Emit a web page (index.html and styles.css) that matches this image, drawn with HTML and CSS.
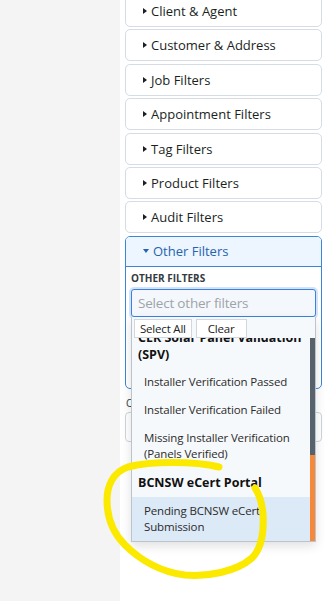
FILE: index.html
```html
<!DOCTYPE html>
<html lang="en">
<head>
    <meta charset="UTF-8">
    <meta name="viewport" content="width=device-width, initial-scale=1.0">
    <title>Filters</title>
    <link rel="stylesheet" href="styles.css">
</head>
<body>
    <div class="page">
        <aside class="side"></aside>

        <main class="panel">
            <div class="filters">
                <div class="card"><div class="card-head"><span class="caret"></span>Client &amp; Agent</div></div>
                <div class="card"><div class="card-head"><span class="caret"></span>Customer &amp; Address</div></div>
                <div class="card"><div class="card-head"><span class="caret"></span>Job Filters</div></div>
                <div class="card"><div class="card-head"><span class="caret"></span>Appointment Filters</div></div>
                <div class="card"><div class="card-head"><span class="caret"></span>Tag Filters</div></div>
                <div class="card"><div class="card-head"><span class="caret"></span>Product Filters</div></div>
                <div class="card"><div class="card-head"><span class="caret"></span>Audit Filters</div></div>

                <div class="card open">
                    <div class="card-head"><span class="caret down"></span>Other Filters</div>
                    <div class="card-body">
                        <div class="field-label">OTHER FILTERS</div>
                        <div class="select">
                            <div class="select-input">Select other filters</div>

                            <!-- open dropdown -->
                            <div class="dropdown">
                                <div class="dd-actions">
                                    <button class="btn-all">Select All</button>
                                    <button class="btn-clear">Clear</button>
                                </div>
                                <div class="dd-list">
                                    <div class="dd-view">
                                        <div class="dd-items">
                                            <div class="dd-group">CER Solar Panel Validation (SPV)</div>
                                            <div class="dd-item">Installer Verification Passed</div>
                                            <div class="dd-item">Installer Verification Failed</div>
                                            <div class="dd-item">Missing Installer Verification (Panels Verified)</div>
                                            <div class="dd-group">BCNSW eCert Portal</div>
                                            <div class="dd-item active">Pending BCNSW eCert Submission</div>
                                        </div>
                                    </div>
                                    <div class="scrollbar">
                                        <div class="thumb"></div>
                                        <div class="track"></div>
                                    </div>
                                </div>
                            </div>
                        </div>
                    </div>
                </div>

                <div class="field">
                    <div class="field-label plain">Created Date</div>
                    <div class="text-input"></div>
                </div>
            </div>
        </main>

        <!-- highlighter mark -->
        <svg class="scribble" width="325" height="601" viewBox="0 0 325 601">
            <path d="M219 467 C195 461, 150 461, 128 467 C113 472, 107 486, 107 500 C107 516, 112 532, 125 545 C139 559, 160 572, 185 575 C207 577, 236 572, 252 558 C262 548, 264 530, 263 514 C262 502, 259 494, 255 488"
                  fill="none" stroke="#fbe900" stroke-width="7" stroke-linecap="round" stroke-linejoin="round"/>
        </svg>
    </div>
</body>
</html>
```

FILE: styles.css
```css
body {
    margin: 0;
    font-family: "Open Sans", "Noto Sans", sans-serif;
    color: #1b1f24;
    background: #ffffff;
}
.page {
    position: relative;
    display: flex;
    width: 325px;
    height: 601px;
    overflow: hidden;
}
.side {
    width: 120px;
    flex: none;
    background: #f4f4f4;
}
.panel {
    flex: 1;
    padding: 0 3px 0 5px;
    background: #ffffff;
}
.filters {
    display: flex;
    flex-direction: column;
    gap: 2.4px;
    margin-top: -5px;
}
.card {
    border: 1px solid #d6dce4;
    border-radius: 5px;
    background: #ffffff;
}
.card-head {
    display: flex;
    align-items: center;
    height: 30px;
    padding-left: 17px;
    font-size: 13px;
    color: #1b1f24;
}
.caret {
    width: 0;
    height: 0;
    margin-right: 4px;
    border-top: 3.5px solid transparent;
    border-bottom: 3.5px solid transparent;
    border-left: 4px solid #1b1f24;
}
.caret.down {
    border-left: 3px solid transparent;
    border-right: 3px solid transparent;
    border-top: 4px solid #2563b0;
    border-bottom: 0;
}
.card.open {
    border-color: #3d85d8;
}
.card.open .card-head {
    height: 29px;
    background: #edf5fe;
    border-bottom: 1px solid #3d85d8;
    border-radius: 4px 4px 0 0;
    color: #2563b0;
}
.card-body {
    padding: 5px 5px 71px 5px;
}
.field-label {
    font-size: 10px;
    line-height: 12px;
    font-weight: 700;
    color: #343a40;
    margin-bottom: 5px;
}
.select {
    position: relative;
}
.select-input {
    height: 26px;
    line-height: 26px;
    padding-left: 6px;
    border: 1px solid #3b82e0;
    border-radius: 3px;
    background: #f4f8fc;
    box-shadow: 0 0 0 2px rgba(59, 130, 224, 0.22);
    font-size: 13.5px;
    letter-spacing: -0.2px;
    color: #9ea3a8;
}
.dropdown {
    position: absolute;
    top: 100%;
    left: 0;
    right: 0;
    z-index: 5;
    border: 1px solid #bcc3ca;
    border-top: 0;
    background: #f6f9fc;
    box-shadow: 0 4px 10px rgba(0, 0, 0, 0.12);
}
.dd-actions {
    display: flex;
    gap: 4px;
    padding: 2px 2px 0;
}
.dd-actions button {
    height: 19px;
    border: 1px solid #d3d7db;
    border-radius: 0;
    background: #ffffff;
    font-family: inherit;
    font-size: 11.5px;
    letter-spacing: -0.2px;
    color: #222222;
}
.btn-all {
    padding: 0 5px;
}
.btn-clear {
    padding: 0 11px;
}
.dd-list {
    display: flex;
    height: 203px;
}
.dd-view {
    flex: 1;
    overflow: hidden;
}
.dd-items {
    margin-top: -14.5px;
}
.dd-group {
    padding: 6px 6px 4.5px;
    font-size: 12.5px;
    line-height: 17px;
    font-weight: 700;
    color: #111111;
}
.dd-item {
    padding: 6px 8px 6px 12px;
    font-size: 11.5px;
    letter-spacing: -0.15px;
    line-height: 16px;
    color: #2b2b2b;
}
.dd-group + .dd-item.active {
    margin-top: 1.5px;
}
.dd-item.active {
    padding-bottom: 6px;
    background: #dce9f7;
}
.scrollbar {
    display: flex;
    flex-direction: column;
    width: 5px;
}
.thumb {
    height: 117px;
    background: #56616b;
}
.track {
    flex: 1;
    background: #f5883a;
}
.field {
    margin-top: 6px;
}
.field-label.plain {
    font-size: 10px;
    font-weight: 400;
    padding-left: 1px;
    margin-bottom: 3px;
}
.text-input {
    height: 28px;
    border: 1px solid #cfd4da;
    border-radius: 4px;
}
.scribble {
    position: absolute;
    top: 0;
    left: 0;
    z-index: 10;
    pointer-events: none;
}
```
